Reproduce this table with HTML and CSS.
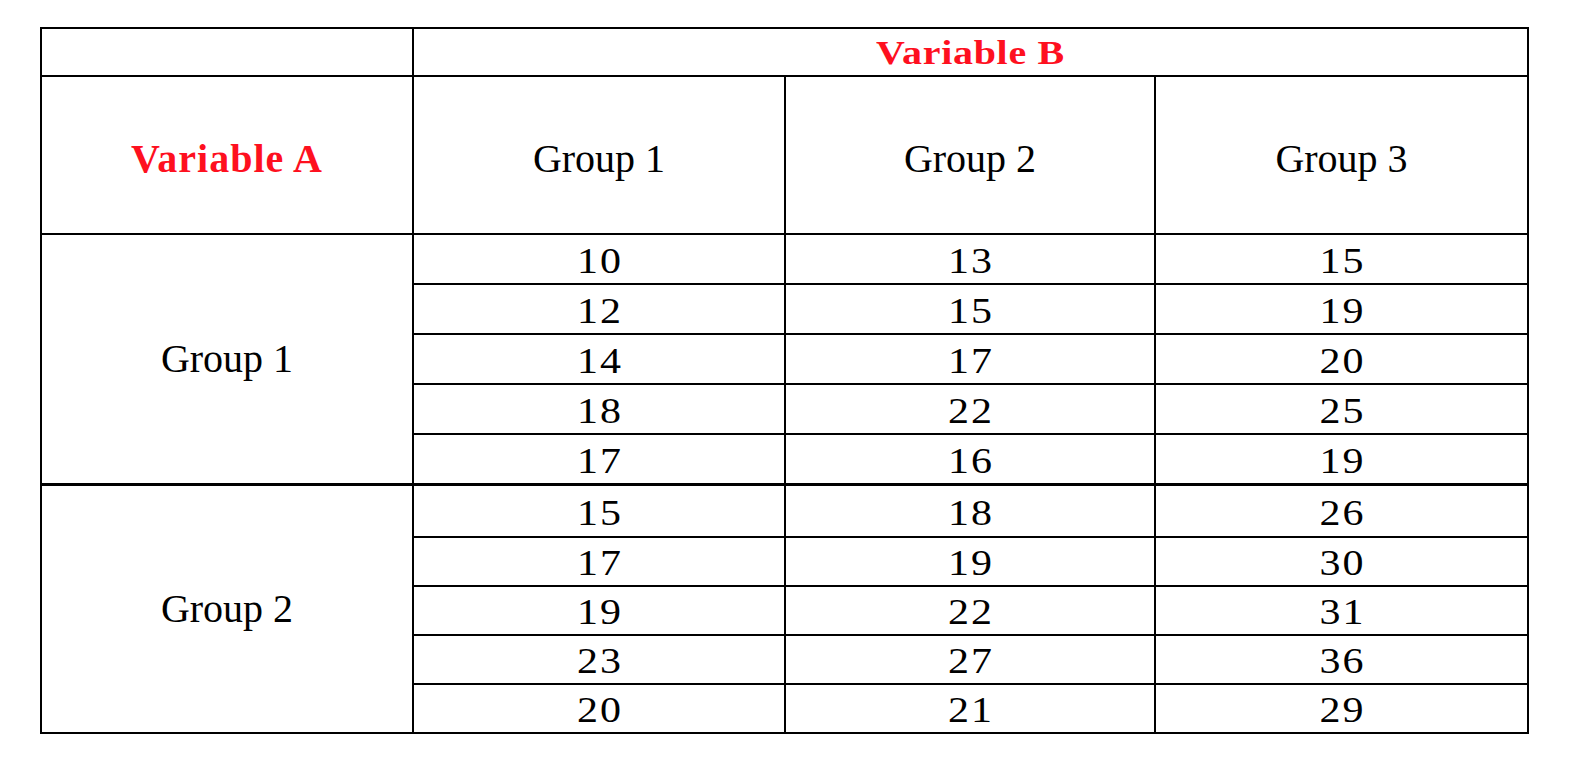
FILE: index.html
```html
<!DOCTYPE html>
<html>
<head>
<meta charset="utf-8">
<link rel="stylesheet" href="styles.css">
</head>
<body>
<table class="grid">
  <colgroup>
    <col class="c0"><col class="c1"><col class="c2"><col class="c3">
  </colgroup>
  <tr class="r-top">
    <td></td>
    <td colspan="3" class="var var-b"><span class="squash-b">Variable B</span></td>
  </tr>
  <tr class="r-head">
    <td class="var var-a">Variable A</td>
    <td>Group 1</td>
    <td>Group 2</td>
    <td>Group 3</td>
  </tr>
  <tr class="r-data"><td rowspan="5" class="grp">Group 1</td><td><span class="num">10</span></td><td><span class="num">13</span></td><td><span class="num">15</span></td></tr>
  <tr class="r-data"><td><span class="num">12</span></td><td><span class="num">15</span></td><td><span class="num">19</span></td></tr>
  <tr class="r-data"><td><span class="num">14</span></td><td><span class="num">17</span></td><td><span class="num">20</span></td></tr>
  <tr class="r-data"><td><span class="num">18</span></td><td><span class="num">22</span></td><td><span class="num">25</span></td></tr>
  <tr class="r-data"><td><span class="num">17</span></td><td><span class="num">16</span></td><td><span class="num">19</span></td></tr>
  <tr class="r-data r-split"><td rowspan="5" class="grp">Group 2</td><td><span class="num">15</span></td><td><span class="num">18</span></td><td><span class="num">26</span></td></tr>
  <tr class="r-data r-b"><td><span class="num">17</span></td><td><span class="num">19</span></td><td><span class="num">30</span></td></tr>
  <tr class="r-data r-b"><td><span class="num">19</span></td><td><span class="num">22</span></td><td><span class="num">31</span></td></tr>
  <tr class="r-data r-b"><td><span class="num">23</span></td><td><span class="num">27</span></td><td><span class="num">36</span></td></tr>
  <tr class="r-data r-b"><td><span class="num">20</span></td><td><span class="num">21</span></td><td><span class="num">29</span></td></tr>
</table>
</body>
</html>
```

FILE: styles.css
```css
html, body {
  margin: 0;
  padding: 0;
  background: #ffffff;
}
body {
  padding: 27px 0 0 40px;
  font-family: "Liberation Serif", "Times New Roman", serif;
  color: #000;
}
.grid {
  border-collapse: collapse;
  table-layout: fixed;
  width: 1487px;
}
.c0 { width: 372px; }
.c1 { width: 372px; }
.c2 { width: 370px; }
.c3 { width: 373px; }
.grid td {
  border: 2px solid #000;
  padding: 0;
  text-align: center;
  vertical-align: middle;
  font-size: 40px;
  line-height: 40px;
}
.r-top td { height: 46px; }
.r-head td { height: 148px; padding-top: 8px; }
.r-data td { height: 44px; padding-top: 4px; }
.r-split td { height: 46px; border-top: 3px solid #000; }
.r-b td { height: 43px; }
.r-data td.grp { padding-top: 0; }
.var {
  color: #fe101f;
  font-weight: bold;
}
.var-a { letter-spacing: 1px; }
.var-b { letter-spacing: 0.7px; }
.squash-b {
  display: inline-block;
  transform: scaleY(0.86);
  position: relative;
  top: 1px;
}
.num {
  display: inline-block;
  font-size: 42px;
  letter-spacing: 2px;
  margin-right: -2px;
  transform: scaleY(0.84);
}
```
